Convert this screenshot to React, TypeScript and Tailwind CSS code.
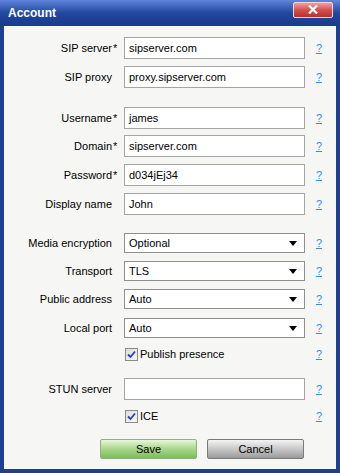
import React from "react";

type Row =
  | { kind: "text"; label: string; req?: boolean; value: string; mt: string }
  | { kind: "select"; label: string; value: string; mt: string }
  | { kind: "check"; label: string; mt: string };

const rows: Row[] = [
  { kind: "text", label: "SIP server", req: true, value: "sipserver.com", mt: "mt-0" },
  { kind: "text", label: "SIP proxy", value: "proxy.sipserver.com", mt: "mt-[7px]" },
  { kind: "text", label: "Username", req: true, value: "james", mt: "mt-[19px]" },
  { kind: "text", label: "Domain", req: true, value: "sipserver.com", mt: "mt-[6px]" },
  { kind: "text", label: "Password", req: true, value: "d034jEj34", mt: "mt-[7px]" },
  { kind: "text", label: "Display name", value: "John", mt: "mt-[7px]" },
  { kind: "select", label: "Media encryption", value: "Optional", mt: "mt-[17px]" },
  { kind: "select", label: "Transport", value: "TLS", mt: "mt-[6px]" },
  { kind: "select", label: "Public address", value: "Auto", mt: "mt-[6px]" },
  { kind: "select", label: "Local port", value: "Auto", mt: "mt-[7px]" },
  { kind: "check", label: "Publish presence", mt: "mt-[4px]" },
  { kind: "text", label: "STUN server", value: "", mt: "mt-[13px]" },
  { kind: "check", label: "ICE", mt: "mt-[5px]" },
];

function Help() {
  return (
    <span className="ml-auto mr-[14px] text-[11px] text-[#2f8ff0] underline">?</span>
  );
}

function Checkbox() {
  return (
    <span className="flex h-[13px] w-[13px] items-center justify-center border border-[#8a8a8a] bg-gradient-to-br from-[#dcdcd8] to-[#f8f8f6]">
      <svg width="9" height="9" viewBox="0 0 9 9">
        <path d="M1 4.5 L3.5 7 L8 1.5" fill="none" stroke="#2a3fc0" strokeWidth="1.8" />
      </svg>
    </span>
  );
}

function FieldRow({ row }: { row: Row }) {
  return (
    <div className={`flex h-[22px] items-center ${row.mt}`}>
      <div className="w-[108px] text-right">{row.kind !== "check" ? row.label : ""}</div>
      <div className="w-[12px] pl-[1px]">{row.kind === "text" && row.req ? "*" : ""}</div>
      {row.kind === "text" && (
        <div className="flex h-[22px] w-[181px] items-center border border-[#a5a5a5] bg-white px-[4px]">
          {row.value}
        </div>
      )}
      {row.kind === "select" && (
        <div className="flex h-[20px] w-[181px] items-center border border-[#8f8f8f] bg-white pl-[4px] pr-[7px]">
          <span>{row.value}</span>
          <svg className="ml-auto" width="8" height="5" viewBox="0 0 8 5">
            <path d="M0 0 H8 L4 5 Z" fill="#000" />
          </svg>
        </div>
      )}
      {row.kind === "check" && (
        <div className="ml-[1px] flex items-center gap-[2px]">
          <Checkbox />
          <span>{row.label}</span>
        </div>
      )}
      <Help />
    </div>
  );
}

export default function App() {
  return (
    <div
      className="flex h-[473px] w-[340px] flex-col overflow-hidden bg-[#1f3f95] text-[11px] text-black"
      style={{ fontFamily: "'Liberation Sans', Arial, sans-serif" }}
    >
      {/* title bar */}
      <div className="flex h-[26px] items-center bg-gradient-to-b from-[#5f86dc] via-[#21479f] to-[#1a3a8c] pl-[8px] pr-[7px]">
        <span className="text-[12px] font-bold text-white">Account</span>
        <div className="ml-auto mb-[7px] flex h-[16px] w-[40px] items-center justify-center rounded-[2px] border border-[#f0d6d6] bg-gradient-to-b from-[#eea0a0] via-[#d05050] to-[#b83030]">
          <svg width="10" height="9" viewBox="0 0 10 9">
            <path d="M1 0.5 L9 8.5 M9 0.5 L1 8.5" stroke="#fff" strokeWidth="2.2" />
          </svg>
        </div>
      </div>

      {/* body */}
      <div className="mx-[4px] mb-[4px] flex flex-1 flex-col bg-[#f6f6f4] pt-[11px]">
        {rows.map((r) => (
          <FieldRow key={r.label} row={r} />
        ))}

        <div className="mt-[12px] flex gap-[10px] pl-[96px]">
          <button className="h-[20px] w-[97px] rounded-[2px] border border-[#8fb27a] bg-gradient-to-b from-[#e8f6dc] via-[#a9d68a] to-[#7cbc5a] text-[11px] text-black">
            Save
          </button>
          <button className="h-[20px] w-[97px] rounded-[2px] border border-[#7a7a7a] bg-gradient-to-b from-[#f4f4f4] via-[#c8c8c8] to-[#9a9a9a] text-[11px] text-black">
            Cancel
          </button>
        </div>
      </div>
    </div>
  );
}
